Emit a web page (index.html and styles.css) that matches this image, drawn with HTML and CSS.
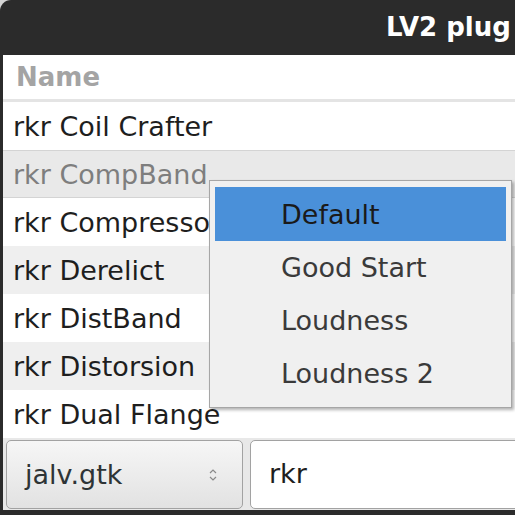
FILE: index.html
```html
<!DOCTYPE html>
<html>
  <head>
    <meta charset="utf-8" />
    <title>LV2 plugins</title>
    <link rel="stylesheet" href="styles.css">
  </head>
  <body>
    <div id="window">
      <div id="titlebar"><span id="title">LV2 plug</span></div>
      <div id="content">
        <div id="list">
          <div class="header">Name</div>
          <div class="row">rkr Coil Crafter</div>
          <div class="row dim">rkr CompBand</div>
          <div class="row">rkr Compressor</div>
          <div class="row odd">rkr Derelict</div>
          <div class="row">rkr DistBand</div>
          <div class="row odd">rkr Distorsion</div>
          <div class="row">rkr Dual Flange</div>
        </div>
        <div id="bottombar">
          <div class="combo">
            <span>jalv.gtk</span>
            <svg width="10" height="14" viewBox="0 0 10 14">
              <path d="M2 5 L5 2 L8 5" fill="none" stroke="#8a8a8a" stroke-width="1.2"/>
              <path d="M2 9 L5 12 L8 9" fill="none" stroke="#8a8a8a" stroke-width="1.2"/>
            </svg>
          </div>
          <div class="entry">rkr</div>
        </div>
      </div>
      <div id="bottomedge"></div>
    </div>
    <div id="popup">
      <div class="item active">Default</div>
      <div class="item">Good Start</div>
      <div class="item">Loudness</div>
      <div class="item">Loudness 2</div>
    </div>
  </body>
</html>
```

FILE: styles.css
```css
body {
  margin: 0;
  width: 515px;
  height: 515px;
  overflow: hidden;
  background-color: #d4d4d4;
  font-family: "DejaVu Sans", sans-serif;
  font-size: 27px;
  position: relative;
}
#window {
  width: 600px;
  background-color: #2b2b2b;
  border-radius: 11px 0 0 0;
}
#titlebar {
  height: 55px;
  line-height: 54px;
  padding-left: 386px;
  color: #ffffff;
  font-size: 26px;
  font-weight: bold;
  white-space: nowrap;
}
#content {
  margin-left: 3px;
  background-color: #e8e8e8;
}
#list {
  background-color: #ffffff;
}
.header {
  height: 44px;
  line-height: 45px;
  padding-left: 13px;
  font-size: 26px;
  font-weight: bold;
  color: #a4a4a4;
  border-bottom: 3px solid #e4e4e4;
}
.row {
  height: 48px;
  line-height: 50px;
  padding-left: 10px;
  color: #1e1e1e;
  white-space: nowrap;
}
.odd {
  background-color: #efefef;
}
.dim {
  background-color: #e9e9e9;
  color: #7e7e7e;
  border-top: 1px solid #d4d4d4;
  border-bottom: 1px solid #d4d4d4;
  height: 46px;
  line-height: 48px;
}
#bottombar {
  display: flex;
  gap: 7px;
  height: 72px;
  padding: 2px 0 0 3px;
  box-sizing: border-box;
}
.combo {
  width: 237px;
  height: 69px;
  box-sizing: border-box;
  border: 1px solid #a2a2a2;
  border-radius: 5px;
  background: linear-gradient(#f6f6f6, #e2e2e2);
  display: flex;
  align-items: center;
  justify-content: space-between;
  padding: 0 24px 0 18px;
  color: #2e3436;
}
.entry {
  flex: 1;
  height: 69px;
  box-sizing: border-box;
  border: 1px solid #a2a2a2;
  border-radius: 5px;
  background-color: #ffffff;
  line-height: 66px;
  padding-left: 18px;
  color: #1e1e1e;
}
#bottomedge {
  height: 5px;
  background-color: #2b2b2b;
}
#popup {
  position: absolute;
  left: 209px;
  top: 180px;
  width: 303px;
  box-sizing: border-box;
  padding: 6px 5px 7px 5px;
  border: 1px solid #a6a6a6;
  background-color: #f0f0f0;
  box-shadow: 2px 2px 3px rgba(0, 0, 0, 0.3);
}
.item {
  height: 53px;
  line-height: 54px;
  padding-left: 66px;
  color: #3a3a3a;
}
.item.active {
  background-color: #4a90d9;
  color: #1a1a1a;
  height: 54px;
  line-height: 55px;
}
```
